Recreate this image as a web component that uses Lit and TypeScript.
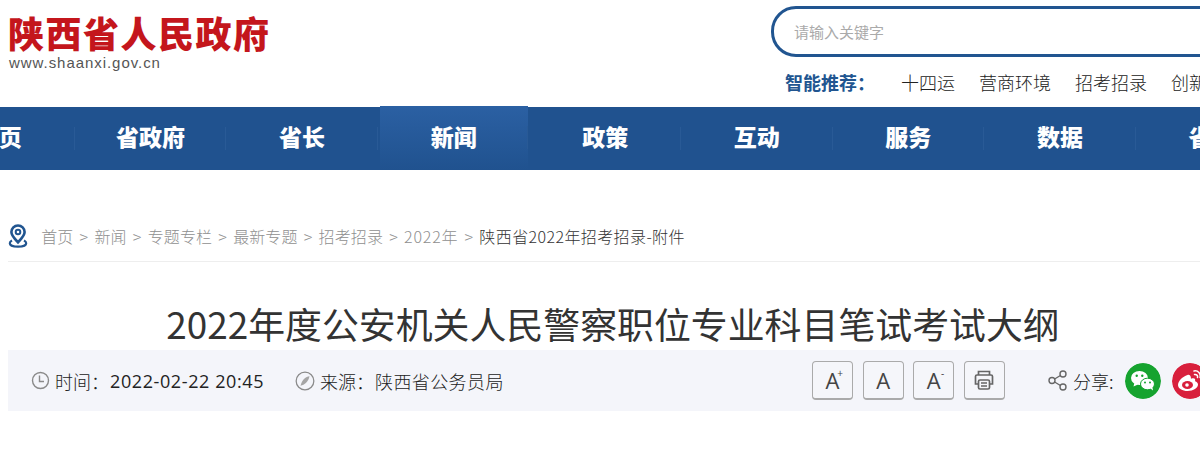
import { LitElement, html, css } from "lit";
import { customElement } from "lit/decorators.js";

const COLON = "\uFF1A";
const NAV = ["首页", "省政府", "省长", "新闻", "政策", "互动", "服务", "数据", "省情"];
const CRUMBS = ["首页", "新闻", "专题专栏", "最新专题", "招考招录", "2022年"];
const HOT = ["十四运", "营商环境", "招考招录", "创新创业"];

@customElement("app-root")
export class AppRoot extends LitElement {
  static styles = css`
    :host {
      display: block;
      width: 1200px;
      height: 471px;
      overflow: hidden;
      background: #fff;
      font-family: "Noto Sans CJK SC", "Noto Sans", sans-serif;
      color: #333;
    }
    .header { display: flex; height: 106px; }
    .logo { width: 771px; flex: none; padding: 10px 0 0 8px; box-sizing: border-box; }
    .logo-cn {
      font-size: 36px; font-weight: 900; color: #c4161c; line-height: 44px;
      letter-spacing: 1.5px; white-space: nowrap;
    }
    .logo-en {
      font-family: "Liberation Sans", sans-serif; font-size: 15px; color: #555;
      letter-spacing: 0.95px; line-height: 18px; padding-left: 1px;
    }
    .tools { width: 429px; flex: none; padding-top: 6px; box-sizing: border-box; overflow: hidden; }
    .search {
      width: 520px; height: 51px; box-sizing: border-box;
      border: 3px solid #215590; border-radius: 25px 0 0 25px;
      padding-left: 20px; display: flex; align-items: center;
      font-size: 15px; color: #aaa;
    }
    .hot { display: flex; margin-top: 13px; white-space: nowrap; font-size: 18px; line-height: 24px; color: #222; }
    .hot b { color: #215590; width: 116px; margin-left: 14px; flex: none; font-weight: 700; font-size: 18px; }
    .hot span { margin-right: 24px; flex: none; font-weight: 300; }
    .nav { display: flex; height: 63px; margin: 1px 0 0 -77px; background: #20528f; width: 1400px; }
    .nav-item {
      flex: 0 0 151.6px; display: flex; align-items: center; justify-content: center;
      position: relative; color: #fff; font-size: 23px; font-weight: 900;
      padding-bottom: 5px; box-sizing: border-box;
    }
    .nav-item::after {
      content: ""; position: absolute; right: 0; top: 20px; height: 23px; width: 1px; background: #295a96;
    }
    .nav-item.on {
      background: linear-gradient(#2b60a3, #20528f);
      height: 64px; margin-top: -1px;
      flex: 0 0 148px; margin-left: 2px; margin-right: 1.6px;
    }
    .crumbs {
      margin: 52px 0 0 8px; height: 40px; border-bottom: 1px solid #eee;
      display: flex; align-items: center; gap: 6.2px; font-size: 16px; font-weight: 300;
      color: #8f8f8f; padding-bottom: 11px; box-sizing: border-box; white-space: nowrap;
      letter-spacing: 0.1px;
    }
    .crumbs svg { margin-right: 7px; flex: none; }
    .crumbs .year { letter-spacing: 0.8px; }
    .crumbs .cur { color: #333; letter-spacing: 0.4px; }
    h1 {
      margin: 36px 0 0; text-align: center; font-size: 36.9px; font-weight: 400; color: #333;
      line-height: 50px; padding-left: 26px; white-space: nowrap;
    }
    .bar {
      margin: 2px 0 0 8px; height: 61px; background: #f4f5fa; display: flex; align-items: center;
      width: 1192px; font-size: 18px; font-weight: 300; color: #222; white-space: nowrap;
    }
    .meta { display: flex; align-items: center; flex: none; }
    .meta svg { flex: none; margin-right: 5px; }
    .time { margin-left: 23px; width: 264px; }
    .source { width: 517px; }
    .org { letter-spacing: 0.4px; margin-left: 1px; }
    .date { font-family: "Open Sans", sans-serif; font-size: 18px; font-weight: 400; letter-spacing: 0.6px; margin-left: 1px; }
    .btns { display: flex; gap: 9.67px; width: 236px; flex: none; }
    .btn {
      width: 41px; height: 39px; box-sizing: border-box; border: 1px solid #aaa;
      border-bottom-width: 2px; border-radius: 4px; display: flex; align-items: center;
      justify-content: center; font-family: "Open Sans", sans-serif; font-size: 22px;
      font-weight: 400; color: #444; position: relative; background: #f5f6fa; flex: none;
    }
    .btn sup { font-size: 10px; line-height: 1; position: absolute; top: 6px; right: 9px; }
    .share { display: flex; align-items: center; flex: none; }
    .share svg.ico { margin-right: 6px; }
    .share .label { width: 52px; }
    .circle { width: 36px; height: 36px; border-radius: 50%; margin-right: 11px; flex: none; display: block; }
  `;

  private pin() {
    return html`<svg width="20" height="24" viewBox="0 0 20 24" fill="none" stroke="#215590">
      <path d="M10 1.5a6.6 6.6 0 0 0-6.6 6.6c0 4 4.200 7.400 6.600 10.200 2.400-2.800 6.600-6.200 6.600-10.200A6.600 6.600 0 0 0 10 1.500z" stroke-width="2.600"/>
      <circle cx="10" cy="8" r="2.300" stroke-width="2"/>
      <path d="M4 16.500C2.500 17.300 1.800 18.200 1.800 19.200c0 2 3.700 3.400 8.200 3.400s8.200-1.400 8.200-3.400c0-1-.7-1.900-2.200-2.700" stroke-width="2.200"/>
    </svg>`;
  }

  private clock() {
    return html`<svg width="19" height="19" viewBox="0 0 19 19" fill="none" stroke="#8a8a8a" stroke-width="1.400">
      <circle cx="9.500" cy="9.500" r="8"/><path d="M8.500 4.500v6h4.500"/>
    </svg>`;
  }

  private compass() {
    return html`<svg width="20" height="20" viewBox="0 0 19 19" fill="none" stroke="#8a8a8a" stroke-width="1.200">
      <circle cx="9.500" cy="9.500" r="8.400"/>
      <path d="M13.800 5c-3.600.6-6.900 2.800-8.600 9 4-.9 7.400-3.600 8.600-9z" fill="#a5a5a5" stroke="none"/>
    </svg>`;
  }

  private printer() {
    return html`<svg width="22" height="22" viewBox="0 0 22 22" fill="none" stroke="#666" stroke-width="1.700">
      <path d="M5.500 6V2.500h11V6"/>
      <path d="M5 15H2.500V7.500a1.500 1.500 0 0 1 1.500-1.500h14a1.500 1.500 0 0 1 1.500 1.500V15H17"/>
      <rect x="5.500" y="11" width="11" height="9" rx="1.500"/>
      <path d="M8 14h6M8 17h6" stroke-width="1.400"/>
    </svg>`;
  }

  private shareIco() {
    return html`<svg class="ico" width="19" height="21" viewBox="0 0 19 21" fill="none" stroke="#666" stroke-width="1.400">
      <circle cx="4" cy="10.500" r="3"/><circle cx="15" cy="4" r="3"/><circle cx="15" cy="17" r="3"/>
      <path d="M6.600 9 12.400 5.500M6.600 12 12.400 15.500"/>
    </svg>`;
  }

  private wechat() {
    return html`<svg class="circle" viewBox="0 0 36 36">
      <circle cx="18" cy="18" r="18" fill="#16a32f"/>
      <ellipse cx="14.500" cy="15" rx="8.500" ry="7" fill="#fff"/>
      <path d="M9.500 19.500 8.500 23.500l4.500-2z" fill="#fff"/>
      <ellipse cx="22.500" cy="21" rx="7" ry="5.800" fill="#fff" stroke="#16a32f" stroke-width="1"/>
      <path d="M25.500 25.500l2.500 2-.6-3.400z" fill="#fff"/>
      <circle cx="11.700" cy="12.800" r="1.200" fill="#16a32f"/><circle cx="17.300" cy="12.800" r="1.200" fill="#16a32f"/>
      <circle cx="20" cy="19.600" r="1" fill="#16a32f"/><circle cx="25" cy="19.600" r="1" fill="#16a32f"/>
    </svg>`;
  }

  private weibo() {
    return html`<svg class="circle" viewBox="0 0 36 36">
      <circle cx="18" cy="18" r="18" fill="#d81f3c"/>
      <path d="M15.500 12c-5 1.500-9.500 6-9.500 10 0 3.500 4.500 6 9.500 6 6 0 10.500-3.200 10.500-6.500 0-2.200-2-3-3-3.300.8-2.200-.5-3.600-4-2.400 0-2.800-1.500-4.500-3.500-3.800z" fill="#fff"/>
      <ellipse cx="15.500" cy="22" rx="5.500" ry="4" fill="#d81f3c"/>
      <circle cx="15" cy="22" r="1.800" fill="#fff"/>
      <path d="M22 8c4-.8 7 2.500 6 6.500M22.500 11.500c2-.3 3.500 1 3 3" fill="none" stroke="#fff" stroke-width="1.500" stroke-linecap="round"/>
    </svg>`;
  }

  render() {
    return html`
      <div class="header">
        <div class="logo">
          <div class="logo-cn">陕西省人民政府</div>
          <div class="logo-en">www.shaanxi.gov.cn</div>
        </div>
        <div class="tools">
          <div class="search">请输入关键字</div>
          <div class="hot">
            <b>智能推荐${COLON}</b>
            ${HOT.map((t) => html`<span>${t}</span>`)}
          </div>
        </div>
      </div>
      <div class="nav">
        ${NAV.map((n, i) => html`<div class="nav-item ${i === 3 ? "on" : ""}">${n}</div>`)}
      </div>
      <div class="crumbs">
        ${this.pin()}
        ${CRUMBS.map((c, i) => html`<span class=${i === 5 ? "year" : ""}>${c}</span><span>&gt;</span>`)}
        <span class="cur">陕西省2022年招考招录-附件</span>
      </div>
      <h1>2022年度公安机关人民警察职位专业科目笔试考试大纲</h1>
      <div class="bar">
        <div class="meta time">${this.clock()}<span>时间${COLON}</span><span class="date">2022-02-22 20:45</span></div>
        <div class="meta source">${this.compass()}<span>来源${COLON}</span><span class="org">陕西省公务员局</span></div>
        <div class="btns">
          <div class="btn">A<sup>+</sup></div>
          <div class="btn">A</div>
          <div class="btn">A<sup>-</sup></div>
          <div class="btn">${this.printer()}</div>
        </div>
        <div class="share">
          ${this.shareIco()}
          <span class="label">分享:</span>
          ${this.wechat()}
          ${this.weibo()}
        </div>
      </div>
    `;
  }
}
